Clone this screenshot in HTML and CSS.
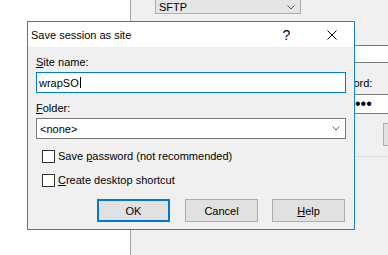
FILE: index.html
```html
<!DOCTYPE html>
<html lang="en">
<head>
  <meta charset="utf-8">
  <title>Save session as site</title>
  <link rel="stylesheet" href="styles.css">
</head>
<body>
  <div class="login">
    <div class="tree"></div>
    <div class="panel">
      <div class="combo combo-flat">
        <span>SFTP</span>
        <svg class="chevron" width="8" height="5" viewBox="0 0 8 5"><polyline points="0.5,0.5 4,4 7.5,0.5" fill="none" stroke="#606060" stroke-width="1"/></svg>
      </div>
      <div class="host-field"></div>
      <div class="pw-label">Password:</div>
      <div class="pw-field"><span class="dots">••••••••</span></div>
      <div class="panel-btn"></div>
      <div class="panel-sep"></div>
    </div>
  </div>

  <div class="dialog">
    <div class="titlebar">
      <div class="title">Save session as site</div>
      <div class="caption-btn help-glyph">?</div>
      <div class="caption-btn">
        <svg width="10" height="10" viewBox="0 0 10 10"><path d="M0.5 0.5 L9.5 9.5 M9.5 0.5 L0.5 9.5" stroke="#000" stroke-width="1" fill="none"/></svg>
      </div>
    </div>
    <div class="content">
      <div class="label"><u>S</u>ite name:</div>
      <div class="edit focus"><span>wrapSO</span><span class="caret"></span></div>
      <div class="label folder"><u>F</u>older:</div>
      <div class="edit combo-edit">
        <span>&lt;none&gt;</span>
        <svg class="chevron" width="8" height="5" viewBox="0 0 8 5"><polyline points="0.5,0.5 4,4 7.5,0.5" fill="none" stroke="#606060" stroke-width="1"/></svg>
      </div>
      <div class="check-row first"><span class="box"></span><span>Save <u>p</u>assword (not recommended)</span></div>
      <div class="check-row"><span class="box"></span><span><u>C</u>reate desktop shortcut</span></div>
      <div class="buttons">
        <div class="btn default">OK</div>
        <div class="btn">Cancel</div>
        <div class="btn"><span><u>H</u>elp</span></div>
      </div>
    </div>
  </div>
</body>
</html>
```

FILE: styles.css
```css
body {
  margin: 0;
  width: 388px;
  height: 255px;
  overflow: hidden;
  position: relative;
  background: #fff;
  color: #000;
  font-family: "Liberation Sans", Arial, sans-serif;
  font-size: 11px;
}
u {
  text-underline-offset: 1px;
}

/* login window behind the dialog */
.login {
  display: flex;
  height: 255px;
}
.tree {
  width: 130px;
  background: #fff;
}
.panel {
  flex: 1;
  background: #f0f0f0;
  border-left: 1px solid #a0a0a0;
  overflow: hidden;
}
.combo-flat {
  margin: -7px 0 0 24px;
  width: 146px;
  height: 21px;
  box-sizing: border-box;
  border: 1px solid #adadad;
  background: #e5e5e5;
  display: flex;
  align-items: center;
  justify-content: space-between;
  padding: 7px 5px 0 3px;
}
.host-field {
  margin: 31px 0 0 170px;
  width: 200px;
  height: 18px;
  box-sizing: border-box;
  border: 1px solid #7a7a7a;
  background: #fff;
}
.pw-label {
  margin: 13px 0 0 190px;
  line-height: 15px;
  height: 15px;
}
.pw-field {
  margin: 3px 0 0 190px;
  width: 200px;
  height: 20px;
  box-sizing: border-box;
  border: 1px solid #7a7a7a;
  background: #fff;
  display: flex;
  align-items: center;
  padding-left: 5px;
}
.dots {
  font-size: 16px;
  line-height: 16px;
}
.panel-btn {
  margin: 9px 0 0 252px;
  width: 75px;
  height: 23px;
  box-sizing: border-box;
  border: 1px solid #adadad;
  background: #e1e1e1;
}
.panel-sep {
  margin: 10px 0 0 190px;
  height: 1px;
  background: #d9d9d9;
}

/* dialog */
.dialog {
  position: absolute;
  left: 27px;
  top: 21px;
  width: 328px;
  height: 209px;
  box-sizing: border-box;
  border: 1px solid #1883d7;
  background: #f0f0f0;
  display: flex;
  flex-direction: column;
}
.titlebar {
  height: 25px;
  background: #fff;
  display: flex;
  align-items: center;
}
.title {
  flex: 1;
  padding-left: 3px;
}
.caption-btn {
  width: 45px;
  height: 25px;
  display: flex;
  align-items: center;
  justify-content: center;
}
.help-glyph {
  font-size: 14px;
}
.content {
  padding: 8px 8px 0;
}
.label {
  line-height: 15px;
  height: 15px;
}
.label.folder {
  margin-top: 8px;
}
.edit {
  margin-top: 2px;
  height: 21px;
  box-sizing: border-box;
  border: 1px solid #7a7a7a;
  background: #fff;
  display: flex;
  align-items: center;
  padding-left: 2px;
}
.edit.focus {
  border-color: #0078d7;
}
.caret {
  width: 1px;
  height: 11px;
  background: #000;
  margin-left: 1px;
}
.combo-edit {
  justify-content: space-between;
  padding: 0 5px 0 3px;
}
.check-row {
  display: flex;
  align-items: center;
  height: 15px;
  line-height: 15px;
  margin-top: 9px;
  padding-left: 6px;
}
.check-row.first {
  margin-top: 10px;
}
.box {
  width: 13px;
  height: 13px;
  box-sizing: border-box;
  border: 1px solid #333;
  background: #fff;
  margin-right: 3px;
}
.buttons {
  display: flex;
  justify-content: flex-end;
  gap: 14px;
  margin: 11px 1px 0 0;
}
.btn {
  width: 73px;
  height: 23px;
  box-sizing: border-box;
  border: 1px solid #adadad;
  background: #e1e1e1;
  display: flex;
  align-items: center;
  justify-content: center;
}
.btn.default {
  border: 2px solid #0078d7;
  margin-right: 1px;
}
```
